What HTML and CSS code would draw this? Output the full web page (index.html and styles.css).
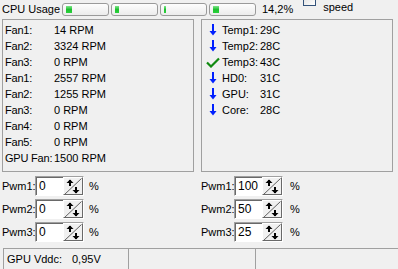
FILE: index.html
```html
<!DOCTYPE html>
<html lang="en">
<head>
  <meta charset="UTF-8">
  <title>Fan Monitor</title>
  <link rel="stylesheet" href="styles.css">
</head>
<body>
  <div class="top-row">
    <span class="cpu-label">CPU Usage</span>
    <div class="bars">
      <div class="bar"><div class="fill" style="width: 6px"></div></div>
      <div class="bar"><div class="fill" style="width: 4px"></div></div>
      <div class="bar"><div class="fill" style="width: 2px"></div></div>
      <div class="bar"><div class="fill" style="width: 6px"></div></div>
    </div>
    <span class="cpu-total">14,2%</span>
    <span class="check-box"></span>
    <span class="check-label">speed</span>
  </div>

  <div class="panels">
    <div class="panel fans">
      <div class="row"><span class="key">Fan1:</span>14 RPM</div>
      <div class="row"><span class="key">Fan2:</span>3324 RPM</div>
      <div class="row"><span class="key">Fan3:</span>0 RPM</div>
      <div class="row"><span class="key">Fan1:</span>2557 RPM</div>
      <div class="row"><span class="key">Fan2:</span>1255 RPM</div>
      <div class="row"><span class="key">Fan3:</span>0 RPM</div>
      <div class="row"><span class="key">Fan4:</span>0 RPM</div>
      <div class="row"><span class="key">Fan5:</span>0 RPM</div>
      <div class="row"><span class="key">GPU Fan:</span>1500 RPM</div>
    </div>
    <div class="panel temps">
      <div class="row"><span class="icon down"></span><span class="tkey">Temp1:</span>29C</div>
      <div class="row"><span class="icon down"></span><span class="tkey">Temp2:</span>28C</div>
      <div class="row"><span class="icon ok"></span><span class="tkey">Temp3:</span>43C</div>
      <div class="row"><span class="icon down"></span><span class="tkey">HD0:</span>31C</div>
      <div class="row"><span class="icon down"></span><span class="tkey">GPU:</span>31C</div>
      <div class="row"><span class="icon down"></span><span class="tkey">Core:</span>28C</div>
    </div>
  </div>

  <div class="pwm-area">
    <div class="pwm-col">
      <div class="pwm-row"><span class="pwm-key">Pwm1:</span><span class="spin-edit"><span class="edit-text">0</span><span class="spin-btn"></span></span><span class="pct">%</span></div>
      <div class="pwm-row"><span class="pwm-key">Pwm2:</span><span class="spin-edit"><span class="edit-text">0</span><span class="spin-btn"></span></span><span class="pct">%</span></div>
      <div class="pwm-row"><span class="pwm-key">Pwm3:</span><span class="spin-edit"><span class="edit-text">0</span><span class="spin-btn"></span></span><span class="pct">%</span></div>
    </div>
    <div class="pwm-col right">
      <div class="pwm-row"><span class="pwm-key">Pwm1:</span><span class="spin-edit"><span class="edit-text">100</span><span class="spin-btn"></span></span><span class="pct">%</span></div>
      <div class="pwm-row"><span class="pwm-key">Pwm2:</span><span class="spin-edit"><span class="edit-text">50</span><span class="spin-btn"></span></span><span class="pct">%</span></div>
      <div class="pwm-row"><span class="pwm-key">Pwm3:</span><span class="spin-edit"><span class="edit-text">25</span><span class="spin-btn"></span></span><span class="pct">%</span></div>
    </div>
  </div>

  <div class="status-bar">
    <div class="status-cell first"><span class="vkey">GPU Vddc:</span>0,95V</div>
    <div class="status-cell second"></div>
    <div class="status-cell third"></div>
  </div>

  <script>
    // draw the little icons once, so the markup stays short
    const downSvg = '<svg width="8" height="12" viewBox="0 0 8 12"><path d="M4 0v10" stroke="#0020ff" stroke-width="2"/><path d="M0.5 7l3.5 4.5 3.5-4.5z" fill="#0020ff"/></svg>';
    const okSvg = '<svg width="14" height="11" viewBox="0 0 14 11"><path d="M1 5.5l4 4 8-8" fill="none" stroke="#108a10" stroke-width="2.2"/></svg>';
    const spinSvg = '<svg width="18" height="17" viewBox="0 0 18 17">' +
      '<path d="M0.5 16.5L17.5 0.5" stroke="#606060" stroke-width="1"/>' +
      '<path d="M6 2v6" stroke="#000" stroke-width="2"/><path d="M2.5 5l3.5-3.5 3.5 3.5z" fill="#000"/>' +
      '<path d="M12 9v6" stroke="#000" stroke-width="2"/><path d="M8.5 12l3.5 3.5 3.5-3.5z" fill="#000"/>' +
      '</svg>';

    document.querySelectorAll('.icon.down').forEach(el => el.innerHTML = downSvg);
    document.querySelectorAll('.icon.ok').forEach(el => el.innerHTML = okSvg);
    document.querySelectorAll('.spin-btn').forEach(el => el.innerHTML = spinSvg);
  </script>
</body>
</html>
```

FILE: styles.css
```css
* { box-sizing: border-box; margin: 0; padding: 0; }
html, body {
  height: 100%;
  overflow: hidden;
}
body {
  font-family: 'Liberation Sans', Arial, sans-serif;
  font-size: 11px;
  color: #000;
  background: #f0f0f0;
  white-space: nowrap;
}

/* top row with the cpu bars */
.top-row {
  display: flex;
  align-items: flex-start;
  height: 19px;
  line-height: 13px;
}
.cpu-label {
  width: 62px;
  padding-left: 2px;
  margin-top: 3px;
}
.bars {
  display: flex;
  gap: 2px;
  margin-top: 3px;
}
.bar {
  width: 47px;
  height: 13px;
  border: 1px solid #9a9a9a;
  border-radius: 3px;
  background: linear-gradient(#fdfdfd, #ececec);
  padding: 2px;
}
.fill {
  height: 7px;
  margin-left: 1px;
  background: linear-gradient(#7ee58a, #1fbf30 50%, #2ad23c);
}
.cpu-total {
  margin: 3px 0 0 6px;
}
.check-box {
  margin: -7px 0 0 10px;
  width: 13px;
  height: 13px;
  border: 1px solid #33527a;
  background: linear-gradient(135deg, #dcdcdc, #fff);
}
.check-label {
  margin: 1px 0 0 7px;
}

/* sensor panels */
.panels {
  display: flex;
  gap: 7px;
  padding-left: 2px;
}
.panel {
  height: 153px;
  border: 1px solid #a0a0a0;
  padding-top: 2px;
}
.panel.fans {
  width: 192px;
  padding-left: 2px;
}
.panel.temps {
  width: 192px;
  padding-left: 3px;
}
.row {
  display: flex;
  align-items: center;
  height: 16px;
}
.key {
  width: 49px;
  letter-spacing: -0.2px;
}
.icon {
  width: 16px;
  height: 16px;
  display: flex;
  align-items: center;
  justify-content: center;
}
.icon svg { display: block; }
.tkey {
  width: 38px;
  margin-left: 1px;
}

/* pwm spin edits */
.pwm-area {
  display: flex;
  padding-top: 2px;
}
.pwm-col {
  width: 200px;
  padding-left: 2px;
}
.pwm-row {
  display: flex;
  align-items: center;
  height: 23px;
}
.pwm-key {
  width: 33px;
}
.spin-edit {
  display: flex;
  width: 49px;
  height: 20px;
  border: 1px solid;
  border-color: #a0a0a0 #fff #fff #a0a0a0;
  background: #fff;
  box-shadow: inset 1px 1px 0 #696969;
  font-size: 12px;
}
.edit-text {
  flex: 1;
  padding: 2px 0 0 3px;
  line-height: 14px;
}
.spin-btn {
  width: 20px;
  border: 1px solid;
  border-color: #fff #696969 #696969 #fff;
  background: #f0f0f0;
}
.spin-btn svg { display: block; }
.pct {
  margin-left: 5px;
}
.pwm-col.right .pct {
  margin-left: 7px;
}

/* status bar */
.status-bar {
  display: flex;
  margin-top: 5px;
  padding-left: 3px;
  height: 25px;
}
.status-cell {
  height: 100%;
  border-top: 1px solid #a0a0a0;
  border-left: 1px solid #a0a0a0;
  display: flex;
  align-items: center;
  padding: 0 0 4px 3px;
}
.status-cell.first { width: 125px; }
.status-cell.second { width: 127px; }
.status-cell.third { flex: 1; }
.vkey {
  width: 65px;
}
```
